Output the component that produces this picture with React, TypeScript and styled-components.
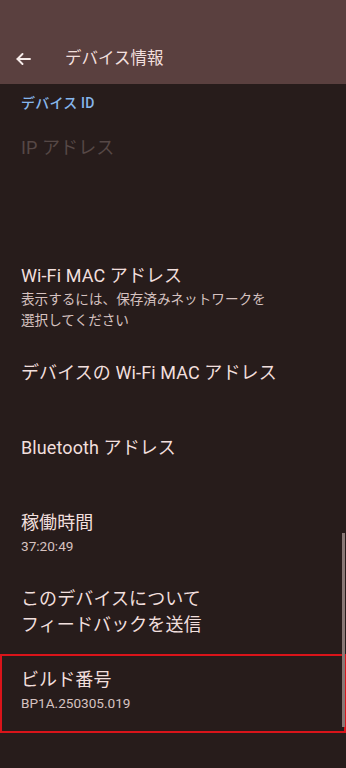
import React from 'react';
import styled, { createGlobalStyle } from 'styled-components';

const GlobalStyle = createGlobalStyle`
    html, body {
        margin: 0;
        padding: 0;
        background: #271c1b;
    }
    body {
        font-family: Roboto, "Noto Sans CJK JP", "Noto Sans", sans-serif;
        -webkit-font-smoothing: antialiased;
    }
`;

const Screen = styled.div`
    position: relative;
    width: 346px;
    height: 768px;
    overflow: hidden;
    background: #271c1b;
    display: flex;
    flex-direction: column;
`;

const TopBar = styled.header`
    height: 84px;
    flex-shrink: 0;
    background: #5a403f;
    display: flex;
    align-items: flex-end;
    padding: 0 0 12px 16px;
    box-sizing: border-box;
    gap: 17px;
`;

const BackButton = styled.button`
    width: 32px;
    height: 26px;
    padding: 0;
    border: none;
    background: transparent;
    color: #f6ecea;
    display: flex;
    align-items: center;
    justify-content: flex-start;
`;

const TopTitle = styled.h1`
    margin: 0;
    font-size: 16.5px;
    font-weight: 400;
    line-height: 26px;
    color: #f1dfdd;
`;

const List = styled.div`
    display: flex;
    flex-direction: column;
`;

const Category = styled.div`
    padding: 10px 21px;
    font-size: 14px;
    font-weight: 500;
    line-height: 18px;
    letter-spacing: 0.2px;
    color: #86b6ec;
`;

const Item = styled.div<{ $highlight?: boolean }>`
    display: flex;
    flex-direction: column;
    justify-content: flex-start;
    min-height: 75px;
    box-sizing: border-box;
    padding: 13px 21px ${(p) => (p.$highlight ? '19px' : '16px')};
    outline: ${(p) => (p.$highlight ? '2px solid #d9141a' : 'none')};
    outline-offset: -2px;
`;

const Title = styled.div<{ $disabled?: boolean }>`
    font-size: 18px;
    line-height: 26px;
    letter-spacing: 0.1px;
    color: ${(p) => (p.$disabled ? '#564846' : '#f1dfdd')};
`;

const Summary = styled.div`
    font-size: 13.6px;
    line-height: 21px;
    color: #d6c2c0;
`;

const Spacer = styled.div<{ $h: number }>`
    height: ${(p) => p.$h}px;
    flex-shrink: 0;
`;

const ScrollThumb = styled.div`
    position: absolute;
    right: 1px;
    top: 533px;
    width: 3px;
    height: 194px;
    background: #8a7977;
`;

const ArrowBack = () => (
    <svg width="15" height="12" viewBox="0 0 15 12" fill="none" stroke="currentColor" strokeWidth="1.9" strokeLinecap="round" strokeLinejoin="round">
        <path d="M14 6H1.5" />
        <path d="M6.5 1L1.5 6l5 5" />
    </svg>
);

export default function App() {
    return (
        <>
            <GlobalStyle />
            <Screen>
                <TopBar>
                    <BackButton aria-label="戻る">
                        <ArrowBack />
                    </BackButton>
                    <TopTitle>デバイス情報</TopTitle>
                </TopBar>
                <List>
                    <Category>デバイス ID</Category>
                    <Item>
                        <Title $disabled>IP アドレス</Title>
                    </Item>
                    <Spacer $h={53} />
                    <Item>
                        <Title>Wi-Fi MAC アドレス</Title>
                        <Summary>
                            表示するには、保存済みネットワークを
                            <br />
                            選択してください
                        </Summary>
                    </Item>
                    <Item>
                        <Title>デバイスの Wi-Fi MAC アドレス</Title>
                    </Item>
                    <Item>
                        <Title>Bluetooth アドレス</Title>
                    </Item>
                    <Item>
                        <Title>稼働時間</Title>
                        <Summary>37:20:49</Summary>
                    </Item>
                    <Item>
                        <Title>
                            このデバイスについて
                            <br />
                            フィードバックを送信
                        </Title>
                    </Item>
                    <Item $highlight>
                        <Title>ビルド番号</Title>
                        <Summary>BP1A.250305.019</Summary>
                    </Item>
                </List>
                <ScrollThumb />
            </Screen>
        </>
    );
}
